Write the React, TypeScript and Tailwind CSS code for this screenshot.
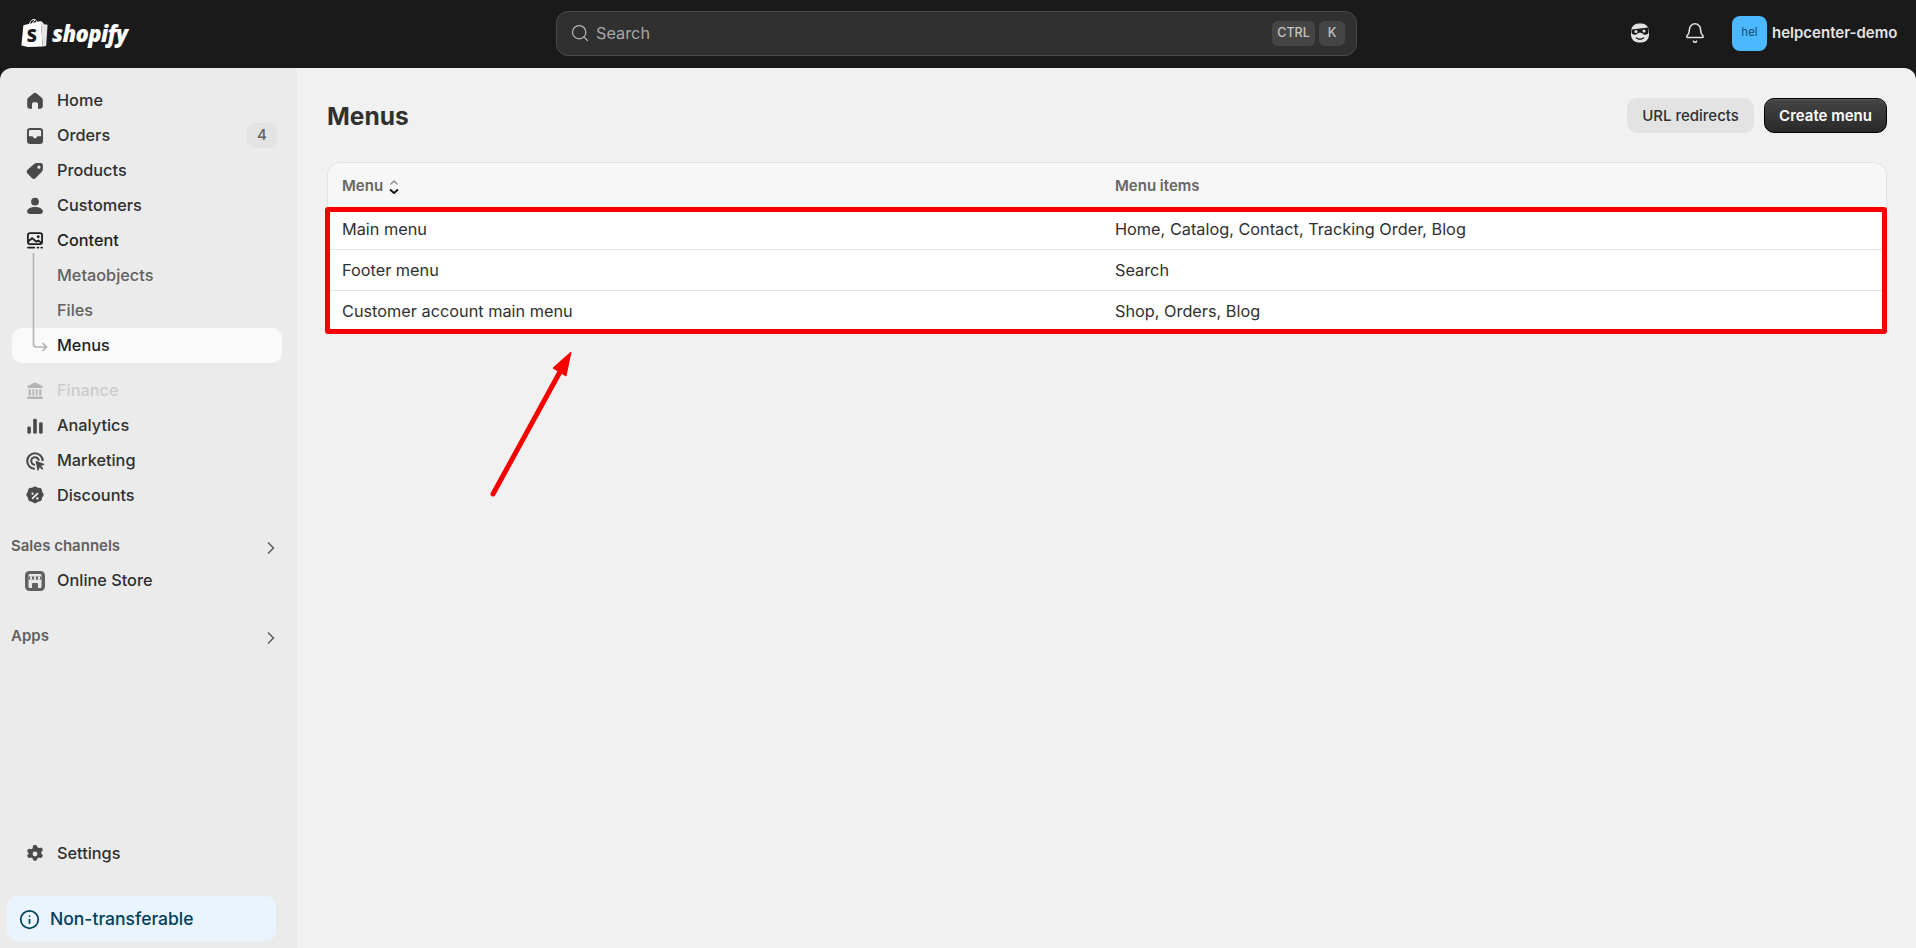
import { ChevronRight, Search, Bell, Info } from 'lucide-react'
import type { ReactNode } from 'react'

// polaris-style glyphs, 20 unit box
function Glyph({ children, className = 'text-[#4a4a4a]' }: { children: ReactNode; className?: string }) {
  return (
    <svg viewBox="0 0 20 20" fill="currentColor" className={`h-6 w-6 shrink-0 ${className}`}>
      {children}
    </svg>
  )
}

const HomeIcon = () => (
  <Glyph>
    <path d="M8.900 3.600a1.800 1.800 0 0 1 2.200 0l4.100 3.200c.8.600 1.300 1.500 1.300 2.500v4.900a2.300 2.300 0 0 1-2.300 2.300h-1.700v-4a1.500 1.500 0 0 0-1.500-1.500h-2a1.500 1.500 0 0 0-1.500 1.500v4H5.800a2.300 2.300 0 0 1-2.300-2.300V9.300c0-1 .5-1.900 1.300-2.500z" />
  </Glyph>
)
const OrdersIcon = () => (
  <Glyph>
    <path fillRule="evenodd" d="M6 3.300h8a2.700 2.700 0 0 1 2.700 2.700v8a2.700 2.700 0 0 1-2.700 2.700H6A2.700 2.700 0 0 1 3.300 14V6A2.700 2.700 0 0 1 6 3.300m0 1.600A1.100 1.100 0 0 0 4.900 6v4.200h2.600c.5 0 .9.300 1 .7.200.6.800 1.100 1.500 1.100s1.300-.5 1.500-1.100c.1-.4.500-.7 1-.7h2.600V6A1.100 1.100 0 0 0 14 4.900z" />
  </Glyph>
)
const TagIcon = () => (
  <Glyph>
    <path fillRule="evenodd" d="M11.400 3.400h3.100a2.100 2.100 0 0 1 2.100 2.100v3.100c0 .8-.3 1.500-.9 2.100l-5.100 5.100a2.300 2.300 0 0 1-3.200 0l-3.700-3.700a2.300 2.300 0 0 1 0-3.200l5.600-4.700c.6-.5 1.300-.8 2.100-.8m1.900 4.700a1.300 1.300 0 1 0 0-2.600 1.300 1.300 0 0 0 0 2.600" />
  </Glyph>
)
const PersonIcon = () => (
  <Glyph>
    <circle cx="10" cy="6.400" r="3.200" />
    <path d="M3.400 14.600c0-2 2.800-3.700 6.600-3.700s6.600 1.700 6.600 3.700c0 1.300-1.100 2-2.300 2H5.700c-1.200 0-2.300-.7-2.300-2" />
  </Glyph>
)
const ContentIcon = () => (
  <Glyph className="text-[#1f1f1f]">
    <rect x="4.100" y="3.400" width="11.800" height="9.200" rx="1.700" fill="none" stroke="currentColor" strokeWidth="1.500" />
    <path d="M4.500 10.200 7.600 7.700l3.600 2.900 1.600-1 2.700 2" fill="none" stroke="currentColor" strokeWidth="1.500" />
    <circle cx="12.700" cy="6.500" r="1.200" />
    <rect x="3.400" y="14.700" width="6.700" height="1.500" rx=".7" />
    <rect x="11.400" y="14.700" width="2.100" height="1.500" rx=".7" />
    <rect x="14.500" y="14.700" width="2.100" height="1.500" rx=".7" />
  </Glyph>
)
const FinanceIcon = () => (
  <Glyph className="text-[#b5b5b5]">
    <path d="M9.300 3.100a1.500 1.500 0 0 1 1.400 0l5.400 2.700c.8.400.5 1.600-.4 1.600H4.300c-.9 0-1.200-1.200-.4-1.600z" />
    <path d="M4.700 8.500h1.800v5.200H4.700zM7.800 8.500h1.500v5.200H7.800zM10.700 8.500h1.500v5.200h-1.500zM13.500 8.500h1.800v5.200h-1.800z" />
    <rect x="3.400" y="14.600" width="13.200" height="2.100" rx=".8" />
  </Glyph>
)
const AnalyticsIcon = () => (
  <Glyph>
    <rect x="3.600" y="10.500" width="3" height="6" rx="1.200" />
    <rect x="8.500" y="4" width="3" height="12.500" rx="1.200" />
    <rect x="13.400" y="6.800" width="3" height="9.700" rx="1.200" />
  </Glyph>
)
const MarketingIcon = () => (
  <Glyph>
    <path d="M10 2.700a7.300 7.300 0 0 1 7.300 7.200h-1.700A5.600 5.600 0 1 0 9.900 15.600v1.700A7.300 7.300 0 0 1 10 2.700" />
    <path d="M10 6a4 4 0 0 1 4 3.800h-1.700A2.300 2.300 0 1 0 10 12.300V14a4 4 0 0 1 0-8" />
    <path d="M10.600 10.600c-.2-.4.200-.8.600-.6l6.200 2.300c.5.200.5.800 0 1l-2.400.9 1.700 1.700a.8.800 0 0 1-1.100 1.100l-1.700-1.700-.9 2.400c-.2.500-.8.500-1 0z" />
  </Glyph>
)
const DiscountIcon = () => (
  <Glyph>
    <path
      fillRule="evenodd"
      d="M8.400 2.600c.9-.8 2.300-.8 3.200 0l.8.7 1.100-.1c1.200-.1 2.200.9 2.300 2.100l.1 1.100.7.800c.8.900.8 2.300 0 3.200l-.7.800-.1 1.100c-.1 1.200-1.100 2.200-2.300 2.300l-1.100.1-.8.7c-.9.800-2.300.8-3.200 0l-.8-.7-1.100-.1c-1.200-.1-2.200-1.100-2.300-2.300l-.1-1.100-.7-.8c-.8-.9-.8-2.300 0-3.200l.7-.8.1-1.100c.1-1.200 1.100-2.200 2.300-2.100l1.100.1zM12.600 7.400a.8.800 0 0 0-1.100 0l-4.100 4.100a.8.800 0 0 0 1.100 1.100l4.100-4.100a.8.800 0 0 0 0-1.100M8 9a1 1 0 1 0 0-2 1 1 0 0 0 0 2m4 4a1 1 0 1 0 0-2 1 1 0 0 0 0 2"
    />
  </Glyph>
)
const StoreIcon = () => (
  <svg viewBox="0 0 22 22" className="h-[22px] w-[22px] shrink-0">
    <rect x="1" y="1" width="20" height="20" rx="4.500" fill="#616161" />
    <rect x="4.500" y="4" width="13" height="14" rx="1.500" fill="#e8e8e8" />
    <rect x="4.500" y="6.500" width="13" height="3" fill="#616161" />
    <path d="M6 6.500h2v3H6zM10 6.500h2v3h-2zM14 6.500h2v3h-2z" fill="#e8e8e8" />
    <path d="M8 18v-4a1 1 0 0 1 1-1h4a1 1 0 0 1 1 1v4z" fill="#616161" />
  </svg>
)
const GearIcon = () => (
  <Glyph>
    <path
      fillRule="evenodd"
      d="M8.400 3.200c.2-.5.7-.8 1.200-.8h.8c.5 0 1 .3 1.200.8l.4 1.200 1.400.7 1.200-.4c.5-.1 1 .1 1.300.5l.4.7c.3.400.2 1-.1 1.400l-.9.900v1.600l.9.900c.3.400.4 1 .1 1.400l-.4.700c-.3.400-.8.600-1.300.5l-1.200-.4-1.400.7-.4 1.200c-.2.500-.7.800-1.200.8h-.8c-.5 0-1-.3-1.200-.8l-.4-1.200-1.400-.7-1.200.4c-.5.100-1-.1-1.300-.5l-.4-.7c-.3-.4-.2-1 .1-1.400l.9-.9V9.200l-.9-.9c-.3-.4-.4-1-.1-1.400l.4-.7c.3-.4.800-.6 1.300-.5l1.200.4 1.400-.7zM10 12a2 2 0 1 0 0-4 2 2 0 0 0 0 4"
    />
  </Glyph>
)

function NavRow({
  icon,
  label,
  tone = 'text-[#303030]',
  active = false,
  indent = false,
  badge,
}: {
  icon?: ReactNode
  label: string
  tone?: string
  active?: boolean
  indent?: boolean
  badge?: string
}) {
  return (
    <div
      className={`flex h-[35px] items-center gap-[10px] rounded-[10px] pl-[11px] pr-[5px] ${active ? 'bg-[#fafafa]' : ''}`}
    >
      {icon ?? <span className={indent ? 'w-6 shrink-0' : ''} />}
      <span className={`flex-1 text-[16.300px] font-medium ${tone}`}>{label}</span>
      {badge && (
        <span className="flex h-[25px] w-[30px] items-center justify-center rounded-[8px] bg-[#e3e3e3] text-[15px] font-medium text-[#616161]">
          {badge}
        </span>
      )}
    </div>
  )
}

function SectionHeading({ label }: { label: string }) {
  return (
    <div className="flex h-[24px] items-center justify-between pl-[11px] pr-[16px]">
      <span className="text-[15px] font-semibold text-[#616161]">{label}</span>
      <ChevronRight size={20} strokeWidth={2} className="mt-[4px] text-[#616161]" />
    </div>
  )
}

function Sidebar() {
  return (
    <aside className="flex w-[297px] shrink-0 flex-col bg-[#ebebeb] pt-[15px] pb-[7px]">
      <nav className="flex flex-col pl-[12px] pr-[15px]">
        <NavRow icon={<HomeIcon />} label="Home" />
        <NavRow icon={<OrdersIcon />} label="Orders" badge="4" />
        <NavRow icon={<TagIcon />} label="Products" />
        <NavRow icon={<PersonIcon />} label="Customers" />
        <NavRow icon={<ContentIcon />} label="Content" tone="text-[#1f1f1f]" />
        <div className="relative">
          <NavRow indent label="Metaobjects" tone="text-[#616161]" />
          <NavRow indent label="Files" tone="text-[#616161]" />
          <NavRow indent active label="Menus" tone="text-[#1f1f1f]" />
          <svg viewBox="0 0 30 100" fill="none" className="absolute left-[10px] top-[-5px] h-[100px] w-[30px]">
            <path d="M11.500 0V91a3 3 0 0 0 3 3H24M20.500 90l4 4-4 4" stroke="#b5b5b5" strokeWidth="1.700" />
          </svg>
        </div>
      </nav>
      <nav className="mt-[10px] flex flex-col pl-[12px] pr-[15px]">
        <NavRow icon={<FinanceIcon />} label="Finance" tone="text-[#cccccc]" />
        <NavRow icon={<AnalyticsIcon />} label="Analytics" />
        <NavRow icon={<MarketingIcon />} label="Marketing" />
        <NavRow icon={<DiscountIcon />} label="Discounts" />
      </nav>
      <div className="mt-[21px]">
        <SectionHeading label="Sales channels" />
        <div className="mt-[5px] pl-[12px] pr-[15px]">
          <NavRow icon={<span className="flex w-6 justify-center"><StoreIcon /></span>} label="Online Store" />
        </div>
      </div>
      <div className="mt-[26px]">
        <SectionHeading label="Apps" />
      </div>
      <div className="mt-auto pl-[12px] pr-[15px]">
        <NavRow icon={<GearIcon />} label="Settings" />
      </div>
      <div className="mx-[7px] mt-[25px] flex h-[45px] w-[269px] items-center gap-[10px] rounded-[10px] bg-[#eaf4ff] pl-[12px] pr-[14px] pt-[1px]">
        <Info size={21} strokeWidth={2} className="shrink-0 text-[#00405c]" />
        <span className="text-[17.500px] font-medium text-[#00405c]">Non-transferable</span>
      </div>
    </aside>
  )
}

function TopBar() {
  return (
    <header className="flex h-[68px] shrink-0 items-center bg-[#1a1a1a] pb-[2px]">
      <div className="flex w-[556px] shrink-0 items-center gap-[3px] pl-[21px]">
        <svg viewBox="0 0 28 32" className="h-[31px] w-[28px]">
          <path d="M2 7.500 20 3l2 26.500L6.500 30 0 28.500z" fill="#ffffff" />
          <path d="M20 3l1.500 1 2 2.500 3.500.5L25.500 29l-3.500.500z" fill="#e4e4e4" />
          <path d="M8 8c0-3 2-6.500 5-6.500 2 0 3.500 2 3.500 5M11 7c.3-2 1.500-4.500 3-4.500" fill="none" stroke="#ffffff" strokeWidth="1" />
          <text x="5.500" y="25" fontFamily="'Open Sans', sans-serif" fontWeight="800" fontSize="18" fill="#1a1a1a">
            S
          </text>
        </svg>
        <span className="font-['Open_Sans',sans-serif] text-[22px] font-extrabold italic leading-none tracking-[-0.6px] text-white">
          shopify
        </span>
      </div>
      <div className="flex h-[45px] w-[801px] shrink-0 items-center rounded-[12px] border border-[#4a4a4a] bg-[#303030] pl-[13px] pr-[11px]">
        <Search size={20} strokeWidth={1.500} className="text-[#b5b5b5]" />
        <span className="ml-[6px] flex-1 text-[16.300px] text-[#a8a8a8]">Search</span>
        <kbd className="flex h-[25px] w-[43px] items-center justify-center rounded-[6px] bg-[#454545] font-['Inter',sans-serif] text-[12.500px] font-medium text-[#c4c4c4]">
          CTRL
        </kbd>
        <kbd className="ml-[4px] flex h-[25px] w-[26px] items-center justify-center rounded-[6px] bg-[#454545] font-['Inter',sans-serif] text-[12.500px] font-medium text-[#c4c4c4]">
          K
        </kbd>
      </div>
      <div className="ml-[271px] flex items-center">
        <svg viewBox="0 0 24 24" className="h-6 w-6">
          <rect x="3" y="2.500" width="18" height="19" rx="7.500" fill="#e3e3e3" />
          <path d="M3.500 8.500 20.500 6.500 20.500 11.500C20 14 16 14.500 14.500 12.500L12 11.500 9.500 12.500C8 14.500 4 14 3.500 11.500z" fill="#1a1a1a" />
          <circle cx="8" cy="10.500" r="1.500" fill="#e3e3e3" />
          <circle cx="16" cy="10" r="1.500" fill="#e3e3e3" />
          <path d="M8.500 17c2 1.500 5 1.500 7 0" fill="none" stroke="#1a1a1a" strokeWidth="1.500" strokeLinecap="round" />
        </svg>
        <Bell size={22} strokeWidth={1.700} className="ml-[32px] text-[#e3e3e3]" />
        <div className="ml-[26px] flex h-[35px] w-[35px] items-center justify-center rounded-[8px] bg-[#4bb8ff] text-[11.500px] text-[#164a6b]">
          hel
        </div>
        <span className="ml-[5px] text-[15px] font-semibold text-[#e3e3e3]">helpcenter-demo</span>
      </div>
    </header>
  )
}

const rows = [
  { name: 'Main menu', items: 'Home, Catalog, Contact, Tracking Order, Blog' },
  { name: 'Footer menu', items: 'Search' },
  { name: 'Customer account main menu', items: 'Shop, Orders, Blog' },
]

function MenusPage() {
  return (
    <main className="relative flex-1 bg-[#f1f1f1] pl-[30px] pr-[29px] pt-[30px]">
      <div className="flex h-[35px] items-center justify-between">
        <h1 className="pt-[2px] text-[24.500px] font-bold text-[#303030]">Menus</h1>
        <div className="flex items-center gap-[10px]">
          <button className="h-[35px] w-[127px] rounded-[10px] bg-[#e3e3e3] pt-[2px] text-[15px] font-medium text-[#303030]">
            URL redirects
          </button>
          <button className="h-[35px] w-[123px] rounded-[10px] border border-black bg-gradient-to-b from-[#454545] to-[#2a2a2a] pt-[1px] text-[15px] font-semibold text-white shadow-[inset_0_1px_0_#5a5a5a]">
            Create menu
          </button>
        </div>
      </div>
      <section className="relative mt-[29px] rounded-t-[14px] border-x border-t border-[#e3e3e3] bg-white">
        <div className="grid h-[46px] grid-cols-[773px_1fr] items-center rounded-t-[14px] bg-[#f7f7f7] px-[14px] pt-[1px]">
          <div className="flex items-center gap-[5px] text-[15px] font-semibold text-[#666666]">
            Menu
            <svg viewBox="0 0 12 18" className="h-[18px] w-3">
              <path d="M2.500 6.500 6 3l3.500 3.500" fill="none" stroke="#8a8a8a" strokeWidth="1.300" />
              <path d="M2 11.500 6 15l4-3.500" fill="none" stroke="#111111" strokeWidth="1.800" />
            </svg>
          </div>
          <div className="text-[15px] font-semibold text-[#666666]">Menu items</div>
        </div>
        {rows.map((row, i) => (
          <div
            key={row.name}
            className={`grid h-[41px] grid-cols-[773px_1fr] items-center px-[14px] text-[16.300px] text-[#303030] ${i < rows.length - 1 ? 'border-b border-[#e3e3e3]' : ''}`}
          >
            <div>{row.name}</div>
            <div>{row.items}</div>
          </div>
        ))}
        {/* annotation drawn on top of the table */}
        <div className="pointer-events-none absolute left-[-3px] right-[-1px] top-[44px] h-[127px] rounded-[3px] border-[5px] border-[#f60000]" />
      </section>
      <svg
        viewBox="0 0 100 160"
        fill="none"
        className="pointer-events-none absolute left-[188px] top-[278px] h-[160px] w-[100px]"
      >
        <path d="M8 148 L 76 24" stroke="#f60000" strokeWidth="5" strokeLinecap="round" />
        <path d="M86 6 L 81 30 L 68 22 Z" fill="#f60000" stroke="#f60000" strokeWidth="1" strokeLinejoin="round" />
      </svg>
    </main>
  )
}

export default function App() {
  return (
    <div className="flex h-screen flex-col overflow-hidden bg-[#1a1a1a] font-['Inter',sans-serif]">
      <TopBar />
      <div className="flex min-h-0 flex-1 overflow-hidden rounded-t-[12px]">
        <Sidebar />
        <MenusPage />
      </div>
    </div>
  )
}
